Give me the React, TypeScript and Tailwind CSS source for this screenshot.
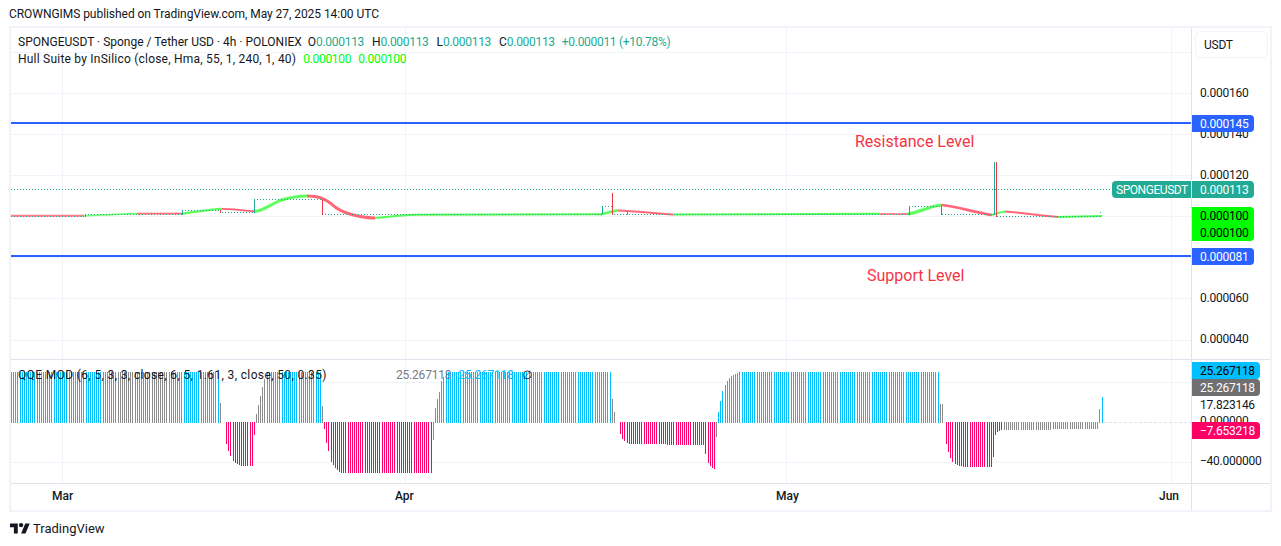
import React from "react";

type Seg = { color: string; pts: [number, number][] };

const BLUE = "#00bfff";
const RED = "#ff0066";
const GRAY = "#8c8c8c";

const segs: Seg[] = [
  { color: BLUE, pts: [[11, 372], [117.5, 372]] },
  { color: GRAY, pts: [[117.5, 372], [169.5, 372]] },
  { color: BLUE, pts: [[169.5, 372], [218.5, 372]] },
  { color: GRAY, pts: [[219, 403], [221.5, 403]] },
  { color: RED, pts: [[225, 439], [227, 448], [229, 453], [231, 458], [233, 461], [235, 463], [237, 464], [239, 465], [241, 466], [252.5, 466], [254, 435], [254.5, 435]] },
  { color: GRAY, pts: [[256, 414], [259, 400], [261, 392], [263, 381], [265, 377], [266.5, 372]] },
  { color: BLUE, pts: [[266.5, 372], [321, 372]] },
  { color: GRAY, pts: [[321.5, 406], [323, 406]] },
  { color: RED, pts: [[324, 429], [326, 443], [328, 451], [330, 460], [332, 464], [334, 466], [336, 469], [338, 470], [340, 473], [431, 473]] },
  { color: GRAY, pts: [[431.5, 440], [433, 440]] },
  { color: BLUE, pts: [[433.5, 417], [436, 402], [439, 392], [441, 381], [445, 372], [611, 372]] },
  { color: GRAY, pts: [[611.5, 396], [614, 412], [615, 412]] },
  { color: RED, pts: [[619, 430], [621, 437], [623, 440], [625, 442], [627, 443], [629, 444], [703, 445], [705, 454], [707, 460], [709, 465], [712, 468], [715, 469]] },
  { color: GRAY, pts: [[715.5, 437], [717, 437]] },
  { color: BLUE, pts: [[717.5, 415], [720, 401], [722, 391], [725, 385], [727, 381], [729, 378], [731, 376], [733, 375], [735, 374], [737, 373], [739, 372], [939.5, 372]] },
  { color: GRAY, pts: [[940, 404], [942, 404]] },
  { color: RED, pts: [[945, 439], [947, 449], [949, 455], [951, 461], [953, 463], [955, 464], [958, 465], [960, 466], [966, 467], [992.5, 467], [994, 436], [996, 433], [998, 431], [1001, 430]] },
  { color: GRAY, pts: [[1001.5, 430], [1098.5, 429]] },
  { color: BLUE, pts: [[1099, 409], [1101, 409], [1102, 397], [1103, 397]] },
];

function valueAt(s: Seg, x: number) {
  const p = s.pts;
  for (let i = 0; i < p.length - 1; i++) {
    if (x >= p[i][0] && x <= p[i + 1][0]) {
      const t = (x - p[i][0]) / (p[i + 1][0] - p[i][0] || 1);
      return p[i][1] + t * (p[i + 1][1] - p[i][1]);
    }
  }
  return null;
}

function makeBars() {
  const out: { x: number; y: number; h: number; c: string }[] = [];
  for (let i = 0; i < 520; i++) {
    const x = Math.round(11 + i * 2.13);
    if (x > 1103) break;
    for (const s of segs) {
      const v = valueAt(s, x);
      if (v !== null) {
        const yv = Math.round(v);
        if (yv < 422) out.push({ x, y: yv, h: 423 - yv, c: s.color });
        else out.push({ x, y: 422, h: yv - 422, c: s.color });
        break;
      }
    }
  }
  return out;
}

const bars = makeBars();

const MAIN_H = [52, 93, 134, 175, 216, 257, 298, 340];
const VERT = [62, 405, 786, 1171];

const green = "#33ff33";
const red = "#ff4455";

const hull: { c: string; w: number; o: number; d: string }[] = [
  { c: red, w: 2, o: 0.7, d: "M11 215.8 L84 215.8" },
  { c: green, w: 1.6, o: 0.7, d: "M84 215.8 C100 215 118 214 137 213.6" },
  { c: red, w: 1.6, o: 0.8, d: "M137 213.6 L182 213.6" },
  { c: green, w: 2.2, o: 0.8, d: "M182 213.6 C195 212 208 209.5 222 208.8" },
  { c: red, w: 1.8, o: 0.85, d: "M222 208.8 C235 209 245 210.5 254 211.5" },
  { c: green, w: 3, o: 0.8, d: "M254 211.5 C262 211 268 206 280 200.5 C288 198 298 196 307 196" },
  { c: red, w: 3, o: 0.8, d: "M307 196 C318 196 325 198 335 207 C343 213 352 215 360 216.5 C366 217.5 370 218 375 218" },
  { c: green, w: 2, o: 0.85, d: "M375 218 C388 217 398 215.5 414 214.8 L600 214.2" },
  { c: green, w: 2.6, o: 0.8, d: "M600 214.5 C606 213.5 612 211 618 210.4" },
  { c: red, w: 2, o: 0.8, d: "M618 210.4 C635 211 655 213.5 673 214.5" },
  { c: green, w: 2, o: 0.85, d: "M673 214.5 L880 213.8" },
  { c: red, w: 1.8, o: 0.7, d: "M880 214 L908 214" },
  { c: green, w: 3, o: 0.8, d: "M908 214 C920 212 930 206 941 205" },
  { c: red, w: 2.6, o: 0.8, d: "M941 205 C955 206 975 212.5 992 215" },
  { c: green, w: 2.2, o: 0.8, d: "M992 215 C997 213 1000 212 1005 211.5" },
  { c: red, w: 2.2, o: 0.8, d: "M1005 211.5 C1020 212.5 1040 215.5 1058 217" },
  { c: green, w: 2, o: 0.85, d: "M1058 217 L1102 216" },
];

const dots = [
  "M11 216.5 H84",
  "M85 214.5 H182",
  "M182 210.5 H221",
  "M222 212.5 H254",
  "M254 199.5 H322",
  "M322 214.5 H602",
  "M602 206.5 H612",
  "M614 214.5 H909",
  "M909 206.5 H941",
  "M942 214.5 H994",
  "M997 216.5 H1100",
  "M11 189.5 H1112",
];

const TEAL = "#22ab94";

const solid: { x: number; y1: number; y2: number; c: string }[] = [
  { x: 85.5, y1: 214, y2: 217, c: TEAL },
  { x: 182.5, y1: 210, y2: 215, c: TEAL },
  { x: 220.5, y1: 210, y2: 213, c: "#f23645" },
  { x: 254.5, y1: 199, y2: 213, c: TEAL },
  { x: 322.5, y1: 199, y2: 215, c: "#f23645" },
  { x: 602.5, y1: 206, y2: 214, c: TEAL },
  { x: 612.5, y1: 193, y2: 215, c: "#f23645" },
  { x: 627.5, y1: 212, y2: 215, c: TEAL },
  { x: 909.5, y1: 206, y2: 215, c: TEAL },
  { x: 941.5, y1: 206, y2: 215, c: "#f23645" },
  { x: 994.5, y1: 162, y2: 215, c: TEAL },
  { x: 996.5, y1: 162, y2: 217, c: "#f23645" },
  { x: 1100.5, y1: 212, y2: 213, c: TEAL },
];

function MainChart() {
  return (
    <svg width={1180} height={331} viewBox="11 28 1180 331" className="block">
      {MAIN_H.map((y) => (
        <line key={y} x1={11} x2={1191} y1={y + 0.5} y2={y + 0.5} stroke="#f0f3fa" />
      ))}
      {VERT.map((x) => (
        <line key={x} x1={x + 0.5} x2={x + 0.5} y1={28} y2={359} stroke="#f0f3fa" />
      ))}
      {hull.map((h, i) => (
        <path key={i} d={h.d} fill="none" stroke={h.c} strokeWidth={h.w} opacity={h.o} />
      ))}
      {dots.map((d, i) => (
        <path key={i} d={d} fill="none" stroke={TEAL} strokeWidth={1} strokeDasharray="1 2" />
      ))}
      {solid.map((s, i) => (
        <line key={i} x1={s.x} x2={s.x} y1={s.y1} y2={s.y2} stroke={s.c} strokeWidth={1} />
      ))}
      <rect x={11} y={122} width={1180} height={2} fill="#2962ff" />
      <rect x={11} y={255} width={1180} height={2} fill="#2962ff" />
    </svg>
  );
}

function QqeChart() {
  return (
    <svg width={1180} height={123} viewBox="11 360 1180 123" className="block" shapeRendering="crispEdges">
      {[382, 462].map((y) => (
        <line key={y} x1={11} x2={1191} y1={y + 0.5} y2={y + 0.5} stroke="#f0f3fa" />
      ))}
      {VERT.map((x) => (
        <line key={x} x1={x + 0.5} x2={x + 0.5} y1={360} y2={483} stroke="#f0f3fa" />
      ))}
      <line x1={1104} x2={1191} y1={422.5} y2={422.5} stroke="#e0e3eb" strokeDasharray="3 2" />
      {bars.map((b, i) => (
        <rect key={i} x={b.x} y={b.y} width={1} height={b.h} fill={b.c} />
      ))}
    </svg>
  );
}

function Logo() {
  return (
    <svg width="20" height="16" viewBox="0 0 36 28" className="block" fill="#131722">
      <path d="M14 22H7V11H0V4h14v18zM28 22h-8l7.5-18h8L28 22z" />
      <circle cx="20" cy="7" r="4" />
    </svg>
  );
}

export default function App() {
  return (
    <div className="w-[1281px] h-[546px] bg-white flex flex-col text-[12px] leading-4 text-[#131722] font-['Roboto',Arial,sans-serif] overflow-hidden">
      <div className="h-[26px] pl-[9px] pt-[6px] whitespace-nowrap tracking-[-0.05px]">
        CROWNGIMS published on TradingView.com, May 27, 2025 14:00 UTC
      </div>

      <div className="ml-[9px] w-[1263px] h-[486px] border-2 border-[#f0f3fa] flex shrink-0">
        <div className="w-[1180px] flex flex-col">
          <div className="relative h-[331px]">
            <MainChart />
            <div className="absolute left-[7px] top-[6px] whitespace-nowrap flex flex-col gap-px">
              <div className="flex h-4 items-center">
                <span>SPONGEUSDT · Sponge / Tether USD · 4h · POLONIEX</span>
                <span className="ml-[6px]">O</span>
                <span className="text-[#22ab94] tracking-[-0.3px]">0.000113</span>
                <span className="ml-[8px]">H</span>
                <span className="text-[#22ab94] tracking-[-0.3px]">0.000113</span>
                <span className="ml-[8px]">L</span>
                <span className="text-[#22ab94] tracking-[-0.3px]">0.000113</span>
                <span className="ml-[8px]">C</span>
                <span className="text-[#22ab94] tracking-[-0.3px]">0.000113</span>
                <span className="ml-[7px] text-[#22ab94] tracking-[-0.3px]">+0.000011 (+10.78%)</span>
              </div>
              <div className="flex h-4 items-center">
                <span className="tracking-[0.22px]">Hull Suite by InSilico (close, Hma, 55, 1, 240, 1, 40)</span>
                <span className="ml-[7px] text-[#00ff00] tracking-[-0.3px]">0.000100</span>
                <span className="ml-[7px] text-[#00ff00] tracking-[-0.3px]">0.000100</span>
              </div>
            </div>
            <div className="absolute left-[844px] top-[104px] text-[16px] leading-5 text-[#f23645] whitespace-nowrap">
              Resistance Level
            </div>
            <div className="absolute left-[856px] top-[238px] text-[16px] leading-5 text-[#f23645] whitespace-nowrap">
              Support Level
            </div>
          </div>
          <div className="relative h-[124px] border-t border-[#e0e3eb]">
            <QqeChart />
            <div className="absolute left-[7px] top-[7px] flex h-4 items-center whitespace-nowrap">
              <span className="w-[378px] tracking-[0.36px]">QQE MOD (6, 5, 3, 3, close, 6, 5, 1.61, 3, close, 50, 0.35)</span>
              <span className="text-[#787b86] tracking-[-0.2px]">25.267118</span>
              <span className="ml-[7px] text-[#00bfff] tracking-[-0.2px]">25.267118</span>
              <span className="ml-[8px]">∅</span>
            </div>
          </div>
          <div className="relative flex-1 border-t border-[#e0e3eb] font-medium">
            <span className="absolute left-[41px] top-[4px]">Mar</span>
            <span className="absolute left-[384px] top-[4px]">Apr</span>
            <span className="absolute left-[765px] top-[4px]">May</span>
            <span className="absolute left-[1148px] top-[4px]">Jun</span>
          </div>
        </div>

        <div className="relative flex-1 border-l border-[#e0e3eb] flex flex-col tracking-[-0.25px]">
          <div className="relative h-[331px] pt-[44px] pl-2 whitespace-nowrap">
            <div className="absolute left-[3px] top-[3px] w-[73px] h-[27px] border border-[#f0f3fa] rounded-md pl-2 flex items-center">
              USDT
            </div>
            {["0.000160", "0.000140", "0.000120", "0.000100", "0.000080", "0.000060", "0.000040"].map((p) => (
              <div key={p} className="h-[41px] flex items-center">{p}</div>
            ))}
            <div className="absolute left-0 top-[87px] w-[62px] h-[17px] bg-[#2962ff] text-white rounded-r-sm pl-2 flex items-center">0.000145</div>
            <div className="absolute left-0 top-[153px] w-[62px] h-[17px] bg-[#22ab94] text-white rounded-r-sm pl-2 flex items-center">0.000113</div>
            <div className="absolute -left-[80px] top-[153px] w-[79px] h-[17px] bg-[#22ab94] text-white rounded-l-sm pl-1 flex items-center tracking-[-0.45px]">SPONGEUSDT</div>
            <div className="absolute left-0 top-[179px] w-[62px] h-[34px] bg-[#00ff00] text-black rounded-r-sm pl-2 flex flex-col justify-center">
              <span className="h-[17px] flex items-center">0.000100</span>
              <span className="h-[17px] flex items-center">0.000100</span>
            </div>
            <div className="absolute left-0 top-[220px] w-[62px] h-[17px] bg-[#2962ff] text-white rounded-r-sm pl-2 flex items-center">0.000081</div>
          </div>
          <div className="relative h-[124px] border-t border-[#e0e3eb] pt-[37px] pl-2 whitespace-nowrap">
            <div className="h-4">17.823146</div>
            <div className="h-4">0.000000</div>
            <div className="h-4 mt-6">−40.000000</div>
            <div className="absolute left-0 top-[2px] w-[68px] h-[17px] bg-[#00bfff] text-black rounded-r-sm pl-2 flex items-center">25.267118</div>
            <div className="absolute left-0 top-[19px] w-[68px] h-[17px] bg-[#707070] text-white rounded-r-sm pl-2 flex items-center">25.267118</div>
            <div className="absolute left-0 top-[62px] w-[68px] h-[17px] bg-[#ff0066] text-white rounded-r-sm pl-2 flex items-center">−7.653218</div>
          </div>
          <div className="flex-1 border-t border-[#e0e3eb]" />
        </div>
      </div>

      <div className="flex items-center gap-[3px] pl-[10px] pt-[9px]">
        <Logo />
        <span className="text-[13px] leading-4 whitespace-nowrap">TradingView</span>
      </div>
    </div>
  );
}
